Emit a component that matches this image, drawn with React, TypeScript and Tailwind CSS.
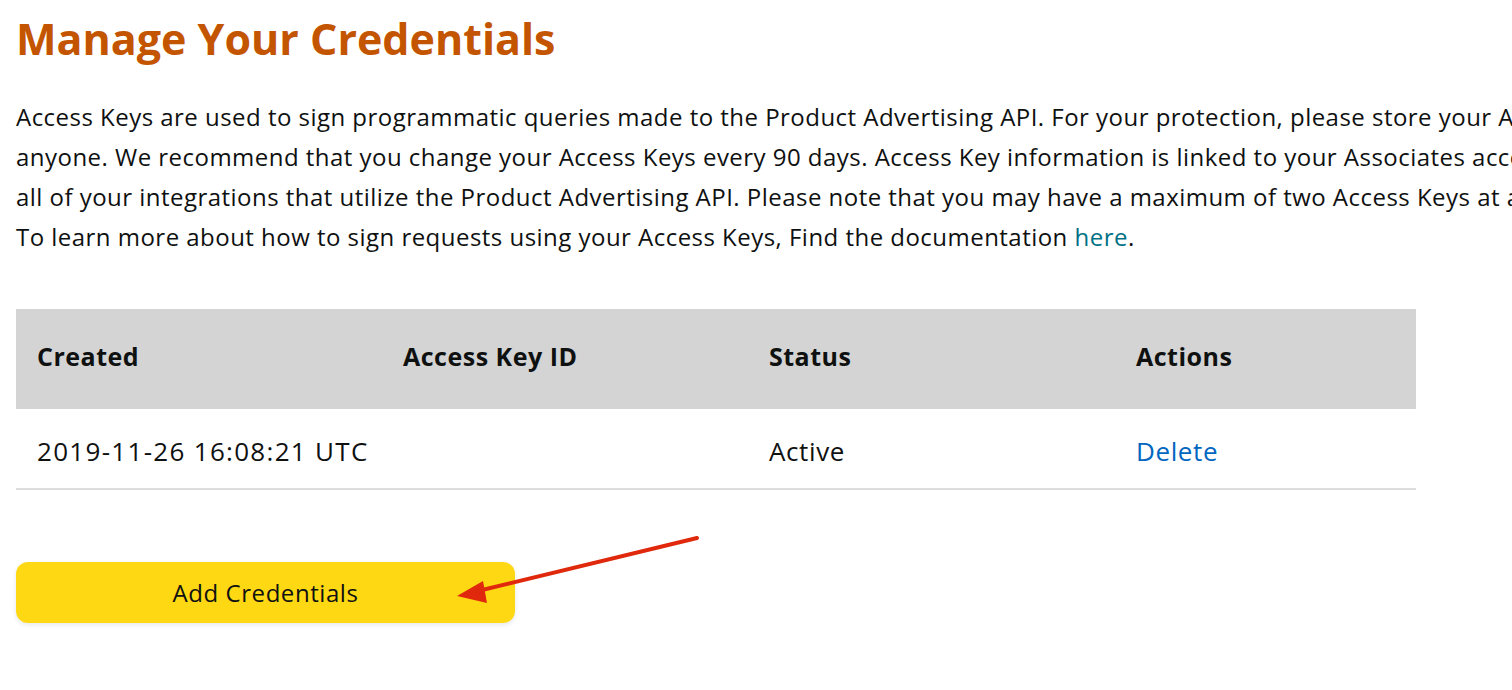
import React from "react";

const font = { fontFamily: '"Open Sans", "Liberation Sans", sans-serif' };

const lines = [
  "Access Keys are used to sign programmatic queries made to the Product Advertising API. For your protection, please store your Access Keys securely and never share them with",
  "anyone. We recommend that you change your Access Keys every 90 days. Access Key information is linked to your Associates account, and deleting a key will affect",
  "all of your integrations that utilize the Product Advertising API. Please note that you may have a maximum of two Access Keys at any time.",
];

function ArrowOverlay() {
  return (
    <svg
      className="pointer-events-none absolute left-0 top-0"
      width="760"
      height="640"
      viewBox="0 0 760 640"
    >
      <line x1="697" y1="538" x2="478" y2="591" stroke="#e0290c" strokeWidth="4" strokeLinecap="round" />
      <polygon points="457,596 483,581 487,603" fill="#e0290c" />
    </svg>
  );
}

export default function App() {
  return (
    <div className="relative h-[690px] w-[1512px] overflow-hidden bg-white text-[#0f1111]" style={font}>
      <div className="pl-4 pt-[13px]">
        <h1 className="text-[43px] font-bold leading-[52px] text-[#c45500]">Manage Your Credentials</h1>

        <div className="mt-[32px] text-[24px] leading-[40px] tracking-[0.47px]">
          {lines.map((l, i) => (
            <div key={i} className="whitespace-nowrap">
              {l}
            </div>
          ))}
          <div className="whitespace-nowrap">
            To learn more about how to sign requests using your Access Keys, Find the documentation{" "}
            <a className="text-[#007185]" href="#">
              here
            </a>
            .
          </div>
        </div>

        <table className="mt-[52px] w-[1400px] border-collapse text-left">
          <thead>
            <tr className="h-[100px] bg-[#d4d4d4] text-[25px] tracking-[0.5px]">
              <th className="w-[366px] pb-[4px] pl-[21px] font-bold">Created</th>
              <th className="w-[366px] pb-[4px] pl-[21px] font-bold">Access Key ID</th>
              <th className="w-[367px] pb-[4px] pl-[21px] font-bold">Status</th>
              <th className="pb-[4px] pl-[21px] font-bold">Actions</th>
            </tr>
          </thead>
          <tbody>
            <tr className="h-[80px] border-b-2 border-[#dddddd] text-[26px] tracking-[0.6px]">
              <td className="pt-[5px] pl-[21px] tracking-[1.3px]">2019-11-26 16:08:21 UTC</td>
              <td className="pt-[5px] pl-[21px]"></td>
              <td className="pt-[5px] pl-[21px]">Active</td>
              <td className="pt-[5px] pl-[21px]">
                <a className="text-[#0066c0]" href="#">
                  Delete
                </a>
              </td>
            </tr>
          </tbody>
        </table>

        <button
          type="button"
          className="mt-[72px] h-[61px] w-[499px] rounded-[12px] bg-[#ffd814] pt-[1px] text-[24px] tracking-[0.55px] text-[#0f1111] shadow-[0_2px_5px_0_rgba(213,217,217,0.6)]"
        >
          Add Credentials
        </button>
      </div>
      <ArrowOverlay />
    </div>
  );
}
